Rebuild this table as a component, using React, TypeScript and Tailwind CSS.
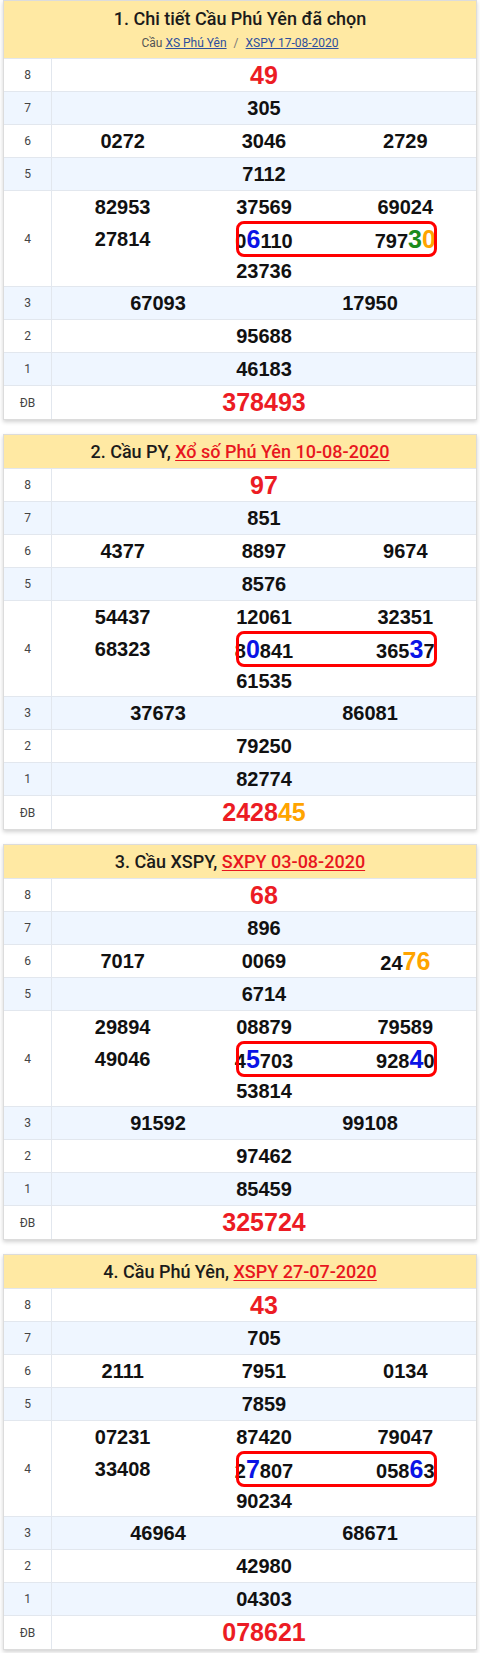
type Card = {
  no: string;
  title: string;
  link?: string;
  sub?: string;
  g8: string;
  g7: string;
  g6: string[];
  g5: string;
  g4: string[];
  g3: string[];
  g2: string;
  g1: string;
  db: string;
};

const cards: Card[] = [
  {
    no: '1',
    title: '1. Chi tiết Cầu Phú Yên đã chọn',
    sub: 'XSPY 17-08-2020',
    g8: '49',
    g7: '305',
    g6: ['0272', '3046', '2729'],
    g5: '7112',
    g4: ['82953', '37569', '69024', '27814', '0{b6}110', '797{g3}{o0}', '23736'],
    g3: ['67093', '17950'],
    g2: '95688',
    g1: '46183',
    db: '378493',
  },
  {
    no: '2',
    title: '2. Cầu PY, ',
    link: 'Xổ số Phú Yên 10-08-2020',
    g8: '97',
    g7: '851',
    g6: ['4377', '8897', '9674'],
    g5: '8576',
    g4: ['54437', '12061', '32351', '68323', '8{b0}841', '365{b3}7', '61535'],
    g3: ['37673', '86081'],
    g2: '79250',
    g1: '82774',
    db: '2428{o45}',
  },
  {
    no: '3',
    title: '3. Cầu XSPY, ',
    link: 'SXPY 03-08-2020',
    g8: '68',
    g7: '896',
    g6: ['7017', '0069', '24{o76}'],
    g5: '6714',
    g4: ['29894', '08879', '79589', '49046', '4{b5}703', '928{b4}0', '53814'],
    g3: ['91592', '99108'],
    g2: '97462',
    g1: '85459',
    db: '325724',
  },
  {
    no: '4',
    title: '4. Cầu Phú Yên, ',
    link: 'XSPY 27-07-2020',
    g8: '43',
    g7: '705',
    g6: ['2111', '7951', '0134'],
    g5: '7859',
    g4: ['07231', '87420', '79047', '33408', '2{b7}807', '058{b6}3', '90234'],
    g3: ['46964', '68671'],
    g2: '42980',
    g1: '04303',
    db: '078621',
  },
];

const hl: Record<string, string> = {
  b: 'text-[#0a14e6] text-[25px]',
  g: 'text-[#1c8c1c] text-[25px]',
  o: 'text-[#ffa400] text-[25px]',
};

// "0{b6}110" -> plain digits plus highlighted ones
const Num = ({ v }: { v: string }) => {
  const parts = v.split(/(\{[bgo][0-9]+\})/).filter(Boolean);
  return (
    <>
      {parts.map((p, i) =>
        p.startsWith('{') ? (
          <span key={i} className={hl[p[1]]}>
            {p.slice(2, -1)}
          </span>
        ) : (
          <span key={i}>{p}</span>
        ),
      )}
    </>
  );
};

const num = "font-['Liberation_Sans',Arial,sans-serif] font-bold text-[20px] leading-none text-[#111]";
const big = "font-['Liberation_Sans',Arial,sans-serif] font-bold text-[25px] leading-none text-[#ec1c24]";

const Row = ({ label, alt, children }: { label: string; alt?: boolean; children: React.ReactNode }) => (
  <div className={`flex border-b border-[#e2e7ee] ${alt ? 'bg-[#eff6ff]' : 'bg-white'}`}>
    <div className="flex w-[48px] shrink-0 items-center justify-center border-r border-[#e2e7ee] text-[12px] text-[#444]">
      {label}
    </div>
    <div className="flex-1">{children}</div>
  </div>
);

const Cols = ({ items }: { items: string[] }) => (
  <div className={`grid h-[32px] items-center text-center ${items.length === 3 ? 'grid-cols-3' : items.length === 2 ? 'grid-cols-2' : 'grid-cols-1'} ${num}`}>
    {items.map((v, i) => (
      <div key={i}>
        <Num v={v} />
      </div>
    ))}
  </div>
);

const ResultCard = ({ c }: { c: Card }) => (
  <div className="mx-[3px] border border-[#dcdcdc] bg-white shadow-[0_2px_4px_rgba(0,0,0,0.18)]">
    {c.sub ? (
      <div className="flex h-[58px] flex-col items-center justify-center border-b border-[#e2e7ee] bg-[#ffe9a3] font-['Roboto',sans-serif]">
        <div className="text-[18px] font-medium leading-none text-[#1b1b1b]">{c.title}</div>
        <div className="mt-[9px] text-[12px] leading-none text-[#555]">
          Cầu <a className="text-[#2e4f9e] underline">XS Phú Yên</a>
          <span className="mx-[7px] text-[#777]">/</span>
          <a className="text-[#2e4f9e] underline">{c.sub}</a>
        </div>
      </div>
    ) : (
      <div className="flex h-[34px] items-center justify-center border-b border-[#e2e7ee] bg-[#ffe9a3] font-['Roboto',sans-serif] text-[18px] font-medium leading-none text-[#1b1b1b]">
        <span className="whitespace-pre">{c.title}</span>
        <a className="text-[#e8161e] underline underline-offset-2">{c.link}</a>
      </div>
    )}

    <Row label="8">
      <div className={`flex h-[32px] items-center justify-center ${big}`}>{c.g8}</div>
    </Row>
    <Row label="7" alt>
      <Cols items={[c.g7]} />
    </Row>
    <Row label="6">
      <Cols items={c.g6} />
    </Row>
    <Row label="5" alt>
      <Cols items={[c.g5]} />
    </Row>
    <Row label="4">
      <div className="relative">
        <Cols items={c.g4.slice(0, 3)} />
        <Cols items={c.g4.slice(3, 6)} />
        <div className={`grid h-[31px] grid-cols-3 items-center text-center ${num}`}>
          <div />
          <div>{c.g4[6]}</div>
        </div>
        <div className="absolute left-[184px] top-[30px] h-[36px] w-[201px] rounded-[8px] border-[3px] border-[#ff0000]" />
      </div>
    </Row>
    <Row label="3" alt>
      <Cols items={c.g3} />
    </Row>
    <Row label="2">
      <Cols items={[c.g2]} />
    </Row>
    <Row label="1" alt>
      <Cols items={[c.g1]} />
    </Row>
    <div className="flex bg-white">
      <div className="flex w-[48px] shrink-0 items-center justify-center border-r border-[#e2e7ee] text-[12px] text-[#444]">ĐB</div>
      <div className={`flex h-[33px] flex-1 items-center justify-center ${big}`}>
        <span>
          {c.db.split(/(\{o[0-9]+\})/).filter(Boolean).map((p, i) =>
            p.startsWith('{') ? (
              <span key={i} className="text-[#ffa400]">{p.slice(2, -1)}</span>
            ) : (
              <span key={i}>{p}</span>
            ),
          )}
        </span>
      </div>
    </div>
  </div>
);

export default function App() {
  return (
    <div className="flex w-[480px] flex-col gap-[14px] bg-white pb-[3px] font-['Roboto','Liberation_Sans',sans-serif]">
      {cards.map(c => (
        <ResultCard key={c.no} c={c} />
      ))}
    </div>
  );
}
